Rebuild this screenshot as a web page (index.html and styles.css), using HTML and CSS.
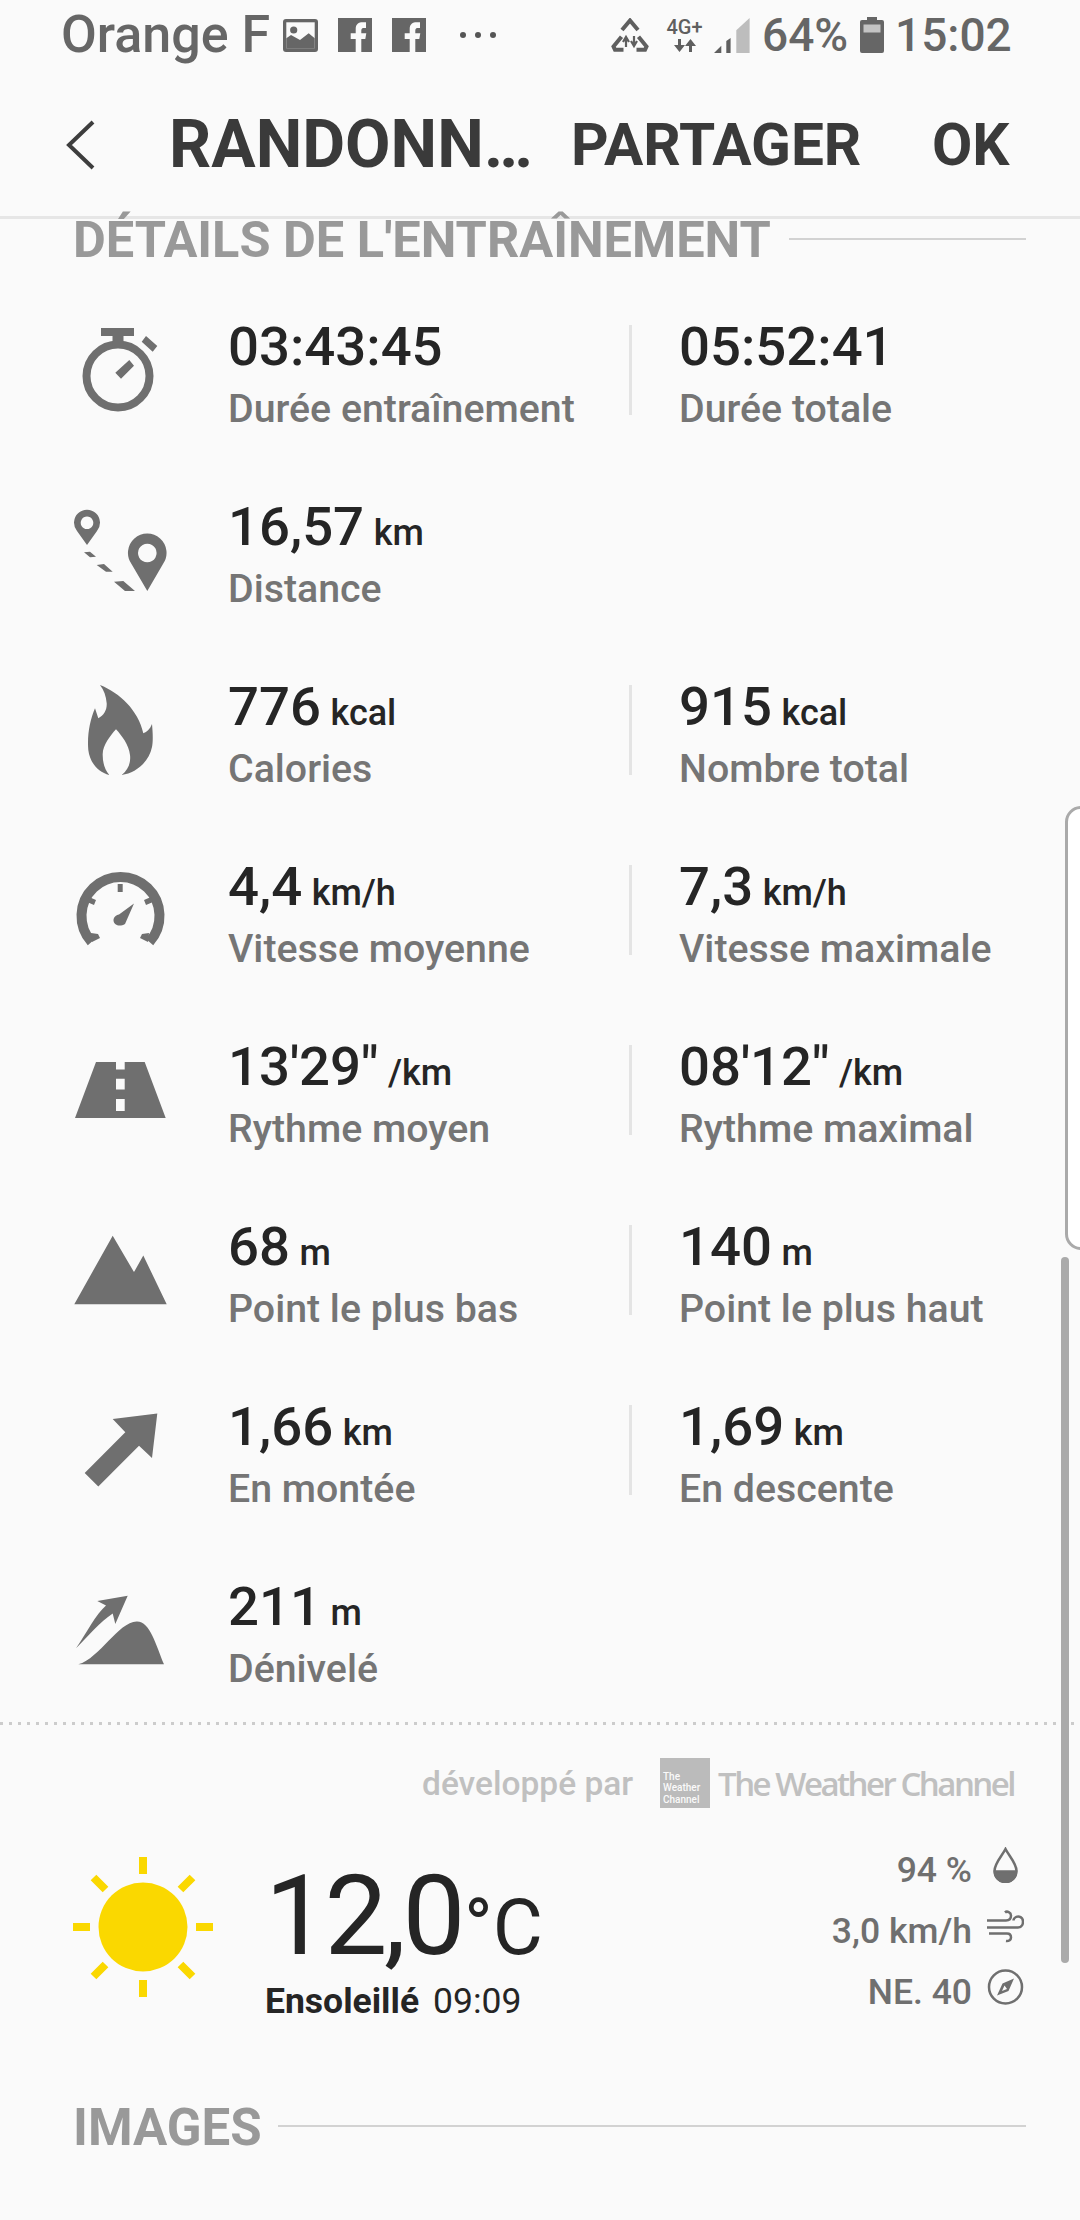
FILE: index.html
```html
<!DOCTYPE html>
<html lang="fr">
<head>
<meta charset="utf-8">
<title>Randonnée</title>
<link rel="stylesheet" href="styles.css">
</head>
<body>
<div class="page">
  <header class="status">
    <span class="carrier">Orange F</span>
    <svg class="si si-img" viewBox="0 0 35 33"><rect width="35" height="33" rx="3" fill="#666"/><rect x="3.300" y="3.300" width="28.400" height="26" fill="#fafafa"/><circle cx="10.700" cy="11" r="3.600" fill="#666"/><path d="M3.300 29.500V19.300L8 16L17 21L25.700 14.300L31.700 19.300V29.500Z" fill="#666"/></svg>
    <svg class="si si-fb" viewBox="0 0 34 34"><rect width="34" height="34" fill="#666"/><path d="M17.700 34V21h-5v-5.700h5V11c0-5 3-6.700 7-6.700h3.300V10h-2c-1.500 0-2.700.5-2.700 2.500v2.800h5l-1 5.700h-4V34z" fill="#fafafa"/></svg>
    <svg class="si si-fb" viewBox="0 0 34 34"><rect width="34" height="34" fill="#666"/><path d="M17.700 34V21h-5v-5.700h5V11c0-5 3-6.700 7-6.700h3.300V10h-2c-1.500 0-2.700.5-2.700 2.500v2.800h5l-1 5.700h-4V34z" fill="#fafafa"/></svg>
    <span class="dots"><i></i><i></i><i></i></span>
    <svg class="si si-rec" viewBox="0 0 38 34" fill="none" stroke="#5f5f5f" stroke-width="4"><path d="M11 12L19 2.500L27 12"/><path d="M10.500 18.700L2.500 28.500L4 31.800H12.500"/><path d="M27.500 18.700L35.500 28.500L34 31.800H25.500"/><path d="M15 29V19M12 24l3 -5 3 5M23 18V28M20 23l3 5 3 -5" stroke-width="2.200"/></svg>
    <span class="net"><span class="net-t">4G+</span><svg class="net-a" viewBox="0 0 24 13" fill="#5f5f5f"><path d="M5 0h3v6h4L6.500 13L1 6h4z M16 13h3V7h4L17.500 0L12 7h4z"/></svg></span>
    <svg class="si si-sig" viewBox="0 0 36 35"><path d="M22.300 12.300L35.600 0V35H22.300Z" fill="#bdbdbd"/><path d="M0 35L7.300 27.700V35Z M12.300 35V23L16.600 20V35Z" fill="#5f5f5f"/></svg>
    <span class="pct">64%</span>
    <svg class="si si-bat" viewBox="0 0 24 36"><path d="M7 0h10v3h5a2 2 0 0 1 2 2v29a2 2 0 0 1-2 2H2a2 2 0 0 1-2-2V5a2 2 0 0 1 2-2h5z" fill="#666"/><rect x="3.500" y="7.500" width="17" height="8" fill="#c4c4c4"/></svg>
    <span class="time">15:02</span>
  </header>

  <nav class="appbar">
    <svg class="back" viewBox="0 0 30 50" fill="none" stroke="#3d3d3d" stroke-width="4"><path d="M27 2 L3 25 L27 48"/></svg>
    <span class="title">RANDONN…</span>
    <span class="action act-share">PARTAGER</span>
    <span class="action act-ok">OK</span>
  </nav>

  <section class="sec-head">
    <h2>DÉTAILS DE L'ENTRAÎNEMENT</h2><span class="rule"></span>
  </section>

  <main class="rows">
    <div class="row">
      <svg class="ic" viewBox="0 0 140 180"><circle cx="58" cy="76" r="31.500" fill="none" stroke="#6f6f6f" stroke-width="8"/><path d="M41 28h33v8H63.500v9h-11v-9H41z M86 36L97.300 46L92.700 51.700L81.700 41.700z M69.300 60L74 65.700L61 78.700L55.300 72.700z" fill="#6f6f6f"/></svg>
      <div class="cell"><div class="val">03:43:45</div><div class="lab">Durée entraînement</div></div>
      <span class="sep"></span>
      <div class="cell"><div class="val">05:52:41</div><div class="lab">Durée totale</div></div>
    </div>
    <div class="row">
      <svg class="ic" viewBox="0 0 140 180"><path fill-rule="evenodd" fill="#6f6f6f" d="M27 65L17 51A13 13 0 1 1 37 51Z M27 36.500a6.300 6.300 0 1 0 .01 0Z M87.300 111L71.500 84A19.300 19.300 0 1 1 103 84Z M87.300 63.700a9.300 9.300 0 1 0 .01 0Z M24 72.300L30 71.700L36 76.700L30 77.300Z M36.700 85L44 84L52.700 91.700L46 91.700Z M54 101.700L63.300 101L75 111L65 111Z"/></svg>
      <div class="cell"><div class="val">16,57 <small>km</small></div><div class="lab">Distance</div></div>
    </div>
    <div class="row">
      <svg class="ic" viewBox="0 0 140 180"><path fill="#6f6f6f" d="M40 25C60 33 78 50 83.300 73.300C87 72 90 69 92 64C93 75 93 82 92 87C89 102 76 113 61.700 115C68 110 71 103 70 95C69 85 62 76 56 69.300C50 76 43 85 42.700 94C42.500 103 45 110 49.300 115C38 112 30 103 28.300 90C27 75 30 60 35 48.300L38.300 58.300C44 55 47 50 46.700 43.300C46 36 44 30 40 25Z"/></svg>
      <div class="cell"><div class="val">776 <small>kcal</small></div><div class="lab">Calories</div></div>
      <span class="sep"></span>
      <div class="cell"><div class="val">915 <small>kcal</small></div><div class="lab">Nombre total</div></div>
    </div>
    <div class="row">
      <svg class="ic" viewBox="0 0 140 180"><path fill="none" stroke="#6f6f6f" stroke-width="10" d="M31.500 102A39 39 0 1 1 89.500 102"/><path fill="#6f6f6f" d="M57.700 44h5v8h-5z M29 57l7 3-2 5-7-3z M91 57l-7 3 2 5 7-3z M31 93l7 1 2 4-8 4z M89 93l-7 1-2 4 8 4z M74 63.600L65 84C60 87 54 85.500 53.500 80.500C53.500 77 56 75 59 74.500Z"/></svg>
      <div class="cell"><div class="val">4,4 <small>km/h</small></div><div class="lab">Vitesse moyenne</div></div>
      <span class="sep"></span>
      <div class="cell"><div class="val">7,3 <small>km/h</small></div><div class="lab">Vitesse maximale</div></div>
    </div>
    <div class="row">
      <svg class="ic" viewBox="0 0 140 180"><path fill="#6f6f6f" d="M36 42H84.700L105.700 98H15Z"/><path fill="#fafafa" d="M56 42h8.700v7.600H56z M56 58.700h8.700v10.800H56z M56 79h8.700v12H56z"/></svg>
      <div class="cell"><div class="val">13'29" <small>/km</small></div><div class="lab">Rythme moyen</div></div>
      <span class="sep"></span>
      <div class="cell"><div class="val">08'12" <small>/km</small></div><div class="lab">Rythme maximal</div></div>
    </div>
    <div class="row">
      <svg class="ic" viewBox="0 0 140 180"><path fill="#6f6f6f" d="M14.300 104.300L52.700 35.700L74 72.100L83.300 55.500L106.700 104.300Z"/></svg>
      <div class="cell"><div class="val">68 <small>m</small></div><div class="lab">Point le plus bas</div></div>
      <span class="sep"></span>
      <div class="cell"><div class="val">140 <small>m</small></div><div class="lab">Point le plus haut</div></div>
    </div>
    <div class="row">
      <svg class="ic" viewBox="0 0 140 180"><path fill="#6f6f6f" d="M97.300 33.600L52.700 38.900L65.300 52.300L24.700 93L38.300 106.400L79 65.700L92 78Z"/></svg>
      <div class="cell"><div class="val">1,66 <small>km</small></div><div class="lab">En montée</div></div>
      <span class="sep"></span>
      <div class="cell"><div class="val">1,69 <small>km</small></div><div class="lab">En descente</div></div>
    </div>
    <div class="row">
      <svg class="ic" viewBox="0 0 140 180"><path fill="#6f6f6f" d="M67.700 35.700L37.300 41L46 45.400C36 54 27 72 16 88.200C28 76 40 62 52.700 53.400L55.300 64.100Z M18.300 104.300C40 98 58 62 76.700 61.400C90 61 96 85 104 104.300Z"/></svg>
      <div class="cell"><div class="val">211 <small>m</small></div><div class="lab">Dénivelé</div></div>
    </div>
  </main>

  <div class="dotted"></div>

  <div class="credit">
    <span class="by">développé par</span>
    <span class="twc-box"><span>The</span><span>Weather</span><span>Channel</span></span>
    <span class="twc-name">The Weather Channel</span>
  </div>

  <section class="weather">
    <svg class="sun" viewBox="0 0 140 140" fill="#fad800"><circle cx="70" cy="70" r="44.500"/><path d="M66 0h8v17h-8z M66 123h8v17h-8z M0 66h17v8H0z M123 66h17v8h-17z" /><path d="M66 0h8v17h-8z M66 123h8v17h-8z M0 66h17v8H0z M123 66h17v8h-17z" transform="rotate(45 70 70)"/></svg>
    <div class="temp">
      <div class="deg"><span class="num">12,0</span><span class="c">°C</span></div>
      <div class="cond"><b>Ensoleillé</b><span>09:09</span></div>
    </div>
    <div class="meta">
      <div class="m"><span>94 %</span><svg viewBox="0 0 37 36" fill="none" stroke="#6f6f6f" stroke-width="2.500"><path d="M18.500 2C15 9 7.500 16 7.500 24A11 11 0 0 0 29.500 24C29.500 16 22 9 18.500 2Z"/><path d="M8 24.500H29A10.500 10.500 0 0 1 8 24.500Z" fill="#6f6f6f"/></svg></div>
      <div class="m"><span>3,0 km/h</span><svg viewBox="0 0 37 36" fill="none" stroke="#6f6f6f" stroke-width="2.500"><path d="M0 12.500H19C23 12.500 24 9.500 24 7.500C24 4.500 20 2.500 18 4.500 M0 19.500H31C35 19.500 36 15.500 36 13.500C36 9.500 32 7.500 29 9C27 10 26.500 11.500 26.500 12.500 M2 25.500H20C23 25.500 24 27.500 24 29.500C24 31.500 22 33.500 19 33"/></svg></div>
      <div class="m"><span>NE. 40</span><svg viewBox="0 0 37 36"><circle cx="18.500" cy="18" r="16.500" fill="none" stroke="#6f6f6f" stroke-width="2.500"/><path d="M27 9.500L21.500 22L10 26.500L15.500 14.500Z M17.500 16.500L15 22L20 20Z" fill="#6f6f6f" fill-rule="evenodd"/></svg></div>
    </div>
  </section>

  <section class="sec-head sec-images">
    <h2>IMAGES</h2><span class="rule"></span>
  </section>

  <div class="edge"></div>
  <div class="scroll"></div>
</div>
</body>
</html>
```
FILE: styles.css
```css
* { box-sizing: border-box; }
html, body { margin: 0; padding: 0; }
body { background: #fafafa; font-family: Roboto, "Noto Sans", sans-serif; }
.page { position: relative; width: 1080px; height: 2220px; overflow: hidden; background: #fafafa; }

.status { height: 70px; display: flex; align-items: center; padding-left: 61px; color: #666; }
.carrier { font-size: 52px; font-weight: 500; line-height: 70px; width: 222px; white-space: nowrap; flex: none; }
.si { display: block; flex: none; }
.si-img { width: 35px; height: 33px; }
.si-fb { width: 34px; height: 34px; margin-left: 20px; }
.dots { display: flex; gap: 9px; margin-left: 34px; width: 36px; flex: none; }
.dots i { width: 6px; height: 6px; border-radius: 50%; background: #555; flex: none; }
.si-rec { width: 38px; height: 34px; margin-left: 115px; }
.net { width: 37px; margin-left: 17px; display: flex; flex-direction: column; align-items: center; color: #5f5f5f; flex: none; }
.net-t { font-size: 20px; font-weight: 500; line-height: 16px; white-space: nowrap; }
.net-a { width: 24px; height: 13px; margin-top: 4px; }
.si-sig { width: 36px; height: 35px; margin-left: 11px; }
.pct { font-size: 46px; font-weight: 500; margin-left: 12px; width: 98px; flex: none; }
.si-bat { width: 24px; height: 36px; }
.time { font-size: 46px; font-weight: 500; margin-left: 11px; }

.appbar { height: 149px; padding-top: 3px; padding-left: 66px; border-bottom: 3px solid #e6e6e6; display: flex; align-items: center; color: #3a3a3a; font-weight: 700; }
.back { width: 30px; height: 50px; flex: none; }
.title { font-size: 66px; margin-left: 73px; width: 402px; white-space: nowrap; flex: none; }
.action { font-size: 58.500px; }
.act-share { width: 361px; flex: none; }

.sec-head { height: 40px; padding: 0 54px 0 73px; display: flex; align-items: center; gap: 18px; }
.sec-head h2 { margin: 0; padding-top: 2px; font-size: 50.500px; line-height: 40px; font-weight: 700; color: #999; white-space: nowrap; }
.rule { flex: 1; height: 2px; background: #d2d2d2; }

.rows { margin-top: 41px; }
.row { height: 180px; display: flex; padding-left: 60px; }
.ic { width: 140px; height: 180px; flex: none; margin-right: 28px; }
.cell { flex: none; padding-top: 15px; }
.row .cell:first-of-type { width: 401px; }
.sep { width: 3px; height: 90px; margin-top: 25px; background: #e4e4e4; margin-right: 47px; flex: none; }
.val { height: 62px; font-size: 54.500px; line-height: 62px; font-weight: 500; color: #252525; white-space: pre; word-spacing: -4px; }
.val small { font-size: 36px; line-height: 0; }
.lab { font-size: 39.300px; line-height: 46px; font-weight: 500; color: #757575; white-space: nowrap; margin-top: 9px; }

.dotted { height: 3px; margin-top: -18px; background: repeating-linear-gradient(to right, #ccc 0 3px, transparent 3px 9px); }

.credit { height: 60px; margin-top: 28px; padding-left: 422px; display: flex; align-items: center; color: #c0c0c0; font-weight: 500; }
.by { font-size: 33.500px; width: 238px; white-space: nowrap; flex: none; }
.twc-box { width: 50px; height: 50px; background: #bbb; color: #fafafa; font-size: 10px; line-height: 11.500px; font-weight: 500; display: flex; flex-direction: column; justify-content: flex-end; padding: 0 0 3px 3px; flex: none; }
.twc-name { margin-left: 8px; font-family: "Open Sans", sans-serif; font-weight: 600; font-size: 33px; letter-spacing: -2.500px; white-space: nowrap; }

.weather { position: relative; height: 220px; margin-top: 27px; display: flex; padding-left: 73px; }
.sun { width: 140px; height: 140px; margin-top: 17px; flex: none; }
.temp { margin-left: 53px; padding-top: 16px; flex: none; }
.deg { display: flex; align-items: baseline; height: 120px; color: #252525; line-height: 120px; }
.num { font-size: 112px; margin-left: -1px; letter-spacing: -3.500px; }
.c { font-size: 77px; margin-left: 2px; }
.cond { font-size: 35.500px; line-height: 44px; margin-top: 3px; margin-left: -1px; color: #252525; display: flex; gap: 14px; }
.cond b { font-weight: 700; }
.meta { position: absolute; right: 56px; top: 0; display: flex; flex-direction: column; }
.m { height: 61px; line-height: 61px; display: flex; align-items: flex-start; justify-content: flex-end; font-size: 35.500px; font-weight: 500; color: #6f6f6f; }
.m span { margin-right: 15px; }
.m svg { width: 37px; height: 36px; margin-top: 7px; }

.sec-images { margin-top: 36px; height: 60px; gap: 16px; }
.sec-images h2 { line-height: 60px; padding-top: 4px; font-size: 51px; }

.edge { position: absolute; left: 1065px; top: 806px; width: 30px; height: 444px; border: 3px solid #aaa; border-radius: 16px 0 0 16px; background: #fff; }
.scroll { position: absolute; left: 1061px; top: 1257px; width: 8px; height: 706px; background: #aaa; border-radius: 4px; }
```
